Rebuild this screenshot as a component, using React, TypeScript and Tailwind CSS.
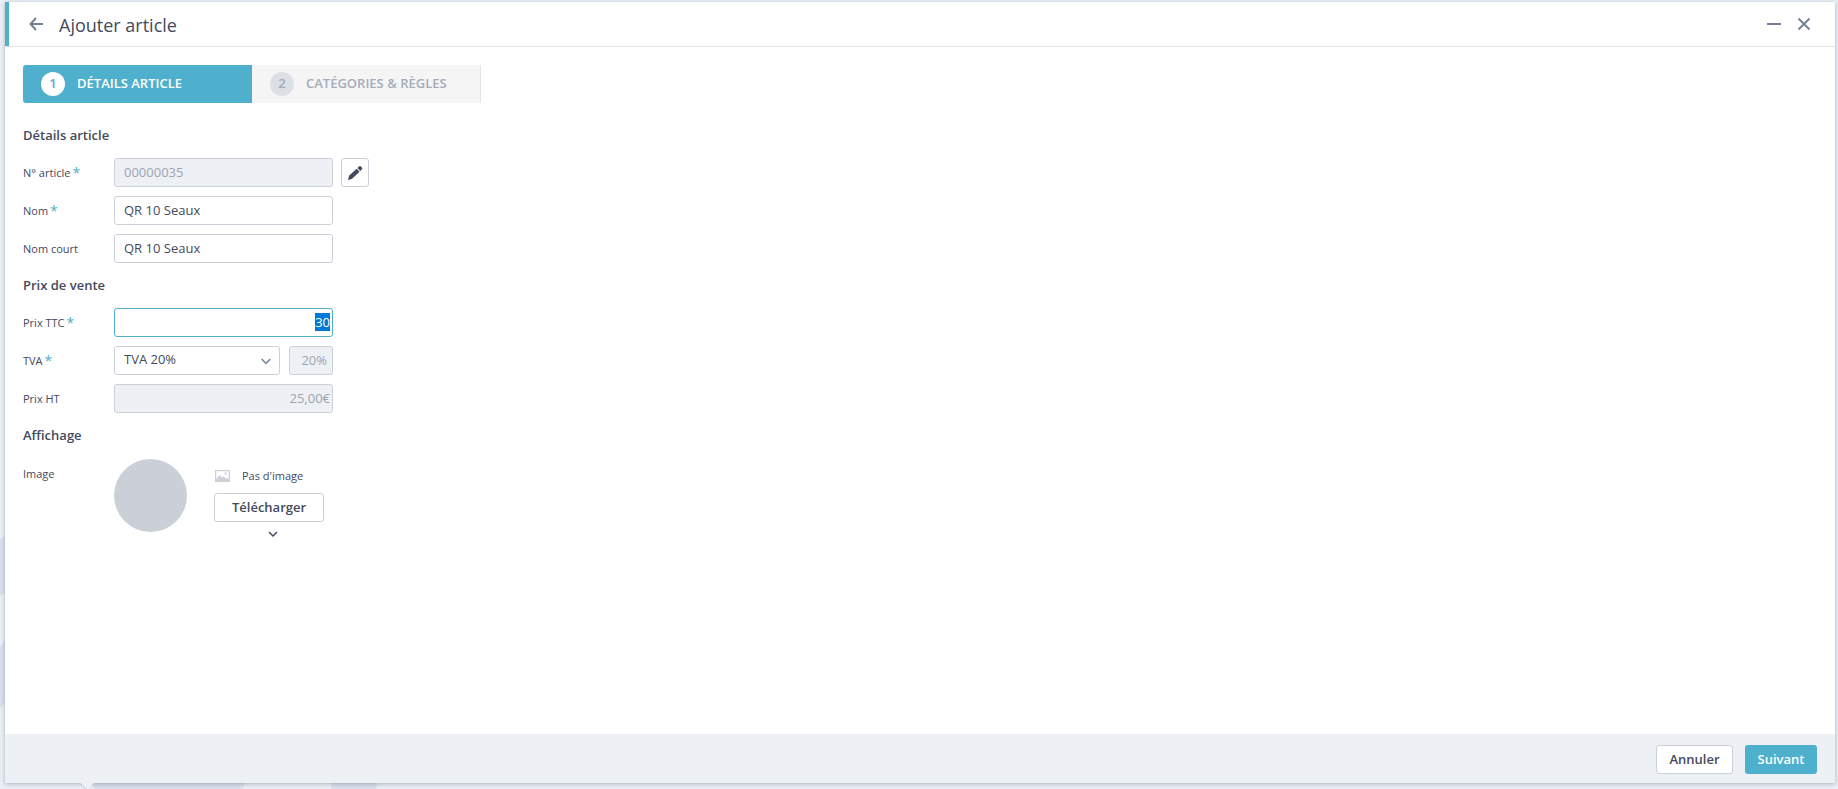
import { useEffect, useRef, useState } from "react";
import type { ReactNode } from "react";

const field =
  "h-[29px] min-w-0 rounded-[3px] border border-[#cbd0d9] bg-white pb-[2px] text-[13px] text-[#434a5c] outline-none focus:border-[#4fb0cd] disabled:bg-[#edf0f5] disabled:text-[#9da4b1]";
const outlineButton =
  "flex h-[29px] items-center justify-center rounded-[3px] border border-[#cbd0d9] bg-white text-[13px] font-semibold text-[#434a5c]";

function SectionTitle({ children }: { children: ReactNode }) {
  return <h2 className="h-[27px] text-[13px] leading-[27px] font-semibold">{children}</h2>;
}

function Row({
  label,
  htmlFor,
  required,
  children,
}: {
  label: string;
  htmlFor: string;
  required?: boolean;
  children: ReactNode;
}) {
  return (
    <div className="flex items-center">
      <label htmlFor={htmlFor} className="flex w-[91px] shrink-0 items-center gap-[2px] pt-px text-[11px] leading-4">
        {label}
        {required && <span className="text-[14px] text-[#4fb0cd]">*</span>}
      </label>
      {children}
    </div>
  );
}

function Step({ index, title, active }: { index: number; title: string; active?: boolean }) {
  return (
    <button
      type="button"
      className={
        active
          ? "flex h-[38px] w-[229px] items-center gap-3 rounded-l-[3px] bg-[#4fb0cd] pl-[18px] text-white"
          : "flex h-[38px] w-[229px] items-center gap-3 border-r border-[#e3e5e8] bg-[#f5f5f5] pl-[18px] text-[#a5acba]"
      }
    >
      <span
        className={
          active
            ? "flex size-6 items-center justify-center rounded-full bg-white text-[13px] font-semibold text-[#4fb0cd]"
            : "flex size-6 items-center justify-center rounded-full bg-[#dce0e6] text-[13px] font-semibold text-[#a5acba]"
        }
      >
        {index}
      </span>
      <span className="text-[13px] font-semibold">{title}</span>
    </button>
  );
}

function Backdrop() {
  return (
    <div aria-hidden="true" className="absolute inset-0 overflow-hidden">
      <svg className="absolute top-0 left-0" width="400" height="789" fill="#d9e0ec">
        <path d="M0 539L30 520V580L0 596ZM0 647L30 605V670L0 709ZM80 770H252L242 789H95ZM333 770H380L376 789H331Z" />
      </svg>
    </div>
  );
}

export default function App() {
  const priceRef = useRef<HTMLInputElement>(null);
  const [name, setName] = useState("QR 10 Seaux");
  const [shortName, setShortName] = useState("QR 10 Seaux");
  const [price, setPrice] = useState("30");

  useEffect(() => {
    priceRef.current?.focus();
    priceRef.current?.select();
  }, []);

  return (
    <div className="relative flex min-h-screen flex-col bg-[#e9eff5] pt-[2px] pr-[3px] pb-[6px] pl-[5px] font-['Open_Sans','Noto_Sans',sans-serif] text-[#434a5c]">
      <Backdrop />
      <main className="relative flex flex-1 flex-col bg-white shadow-[0_1px_4px_rgba(70,80,100,0.4)]">
        <header className="flex h-[45px] items-center border-b border-[#e3e5e9] pr-6">
          <span className="w-1 self-stretch bg-[#4fb0cd]" />
          <button type="button" aria-label="Retour" className="ml-5 text-[#75809a]">
            <svg width="14" height="14" viewBox="0 0 14 14" fill="none" stroke="currentColor" strokeWidth="2">
              <path d="M14 7H1.5M7 1L1.5 7l5.5 6" />
            </svg>
          </button>
          <h1 className="ml-4 flex-1 pt-[2px] text-[18px] leading-6">Ajouter article</h1>
          <button type="button" aria-label="Réduire" className="mr-4 text-[#75809a]">
            <svg width="14" height="14" viewBox="0 0 14 14" fill="currentColor">
              <path d="M0 6h14v2H0z" />
            </svg>
          </button>
          <button type="button" aria-label="Fermer" className="text-[#75809a]">
            <svg width="14" height="14" viewBox="0 0 14 14" fill="none" stroke="currentColor" strokeWidth="2">
              <path d="M1.5 1.5l11 11M12.5 1.5l-11 11" />
            </svg>
          </button>
        </header>

        <div className="flex flex-1 flex-col px-[18px] pt-[18px]">
          <nav aria-label="Étapes" className="flex">
            <Step index={1} title="DÉTAILS ARTICLE" active />
            <Step index={2} title="CATÉGORIES & RÈGLES" />
          </nav>

          <form className="mt-[19px] flex flex-col gap-[9px]">
            <SectionTitle>Détails article</SectionTitle>
            <Row label="N° article" htmlFor="number" required>
              <input id="number" className={`${field} w-[219px] px-[9px]`} defaultValue="00000035" disabled />
              <button type="button" aria-label="Modifier le numéro" className={`${outlineButton} ml-2 w-7`}>
                <svg width="16" height="16" viewBox="0 0 16 16" fill="currentColor">
                  <path d="M1 15l1-4.2 7.6-7.1 3 3-7.8 7.2zM10.4 3l1.7-1.6c.5-.5 1.2-.5 1.7 0l1.1 1.1c.5.5.5 1.2 0 1.7L13.3 5.9z" />
                </svg>
              </button>
            </Row>
            <Row label="Nom" htmlFor="name" required>
              <input
                id="name"
                className={`${field} w-[219px] px-[9px]`}
                value={name}
                onChange={(e) => setName(e.target.value)}
              />
            </Row>
            <Row label="Nom court" htmlFor="short">
              <input
                id="short"
                className={`${field} w-[219px] px-[9px]`}
                value={shortName}
                onChange={(e) => setShortName(e.target.value)}
              />
            </Row>

            <SectionTitle>Prix de vente</SectionTitle>
            <Row label="Prix TTC" htmlFor="gross" required>
              <input
                id="gross"
                ref={priceRef}
                className={`${field} w-[219px] px-[2px] text-right selection:bg-[#0078d7] selection:text-white`}
                value={price}
                onChange={(e) => setPrice(e.target.value)}
              />
            </Row>
            <Row label="TVA" htmlFor="vat" required>
              <div className="relative flex">
                <select id="vat" className={`${field} w-[166px] appearance-none px-[9px]`}>
                  <option>TVA 20%</option>
                </select>
                <svg
                  className="pointer-events-none absolute top-3 right-[9px] text-[#75809a]"
                  width="10"
                  height="7"
                  viewBox="0 0 10 7"
                  fill="none"
                  stroke="currentColor"
                  strokeWidth="1.5"
                >
                  <path d="M.7 1L5 5.4 9.3 1" />
                </svg>
              </div>
              <input
                aria-label="Taux de TVA"
                className={`${field} ml-[9px] w-11 px-[5px] text-right`}
                defaultValue="20%"
                disabled
              />
            </Row>
            <Row label="Prix HT" htmlFor="net">
              <input id="net" className={`${field} w-[219px] px-[2px] text-right`} defaultValue="25,00€" disabled />
            </Row>

            <SectionTitle>Affichage</SectionTitle>
            <div className="flex items-start pt-px">
              <span className="w-[91px] pt-[7px] text-[11px] leading-4">Image</span>
              <span className="size-[73px] rounded-full bg-[#cbd0d8]" />
              <div className="ml-[27px] flex w-[110px] flex-col pt-[9px]">
                <div className="flex items-center gap-3 pl-px text-[11px] leading-4">
                  <svg width="15" height="12" viewBox="0 0 15 12" fill="#cbd0d9" fillRule="evenodd">
                    <path d="M0 0h15v12H0zM1.3 1.3v8.2L4.6 5l2.2 2.8 1.5-1.5L11 8.6l1-.8 1.7 1.6V1.3zM9.7 2.6h2v2h-2z" />
                  </svg>
                  Pas d'image
                </div>
                <button type="button" className={`${outlineButton} mt-[9px]`}>
                  Télécharger
                </button>
                <button type="button" aria-label="Plus d'options" className="mt-[9px] ml-[54px] self-start">
                  <svg width="10" height="7" viewBox="0 0 10 7" fill="none" stroke="currentColor" strokeWidth="1.5">
                    <path d="M1 1l4 4 4-4" />
                  </svg>
                </button>
              </div>
            </div>
          </form>
        </div>

        <footer className="relative flex h-[49px] items-center justify-end gap-3 bg-[#edf0f5] pt-[2px] pr-[18px]">
          <button type="button" className={`${outlineButton} w-[77px]`}>
            Annuler
          </button>
          <button
            type="button"
            className="h-[29px] w-[72px] rounded-[3px] bg-[#4fb0cd] text-[13px] font-semibold text-white"
          >
            Suivant
          </button>
          <svg className="absolute top-full left-[75px]" width="14" height="6" viewBox="0 0 14 6">
            <path d="M0 0h14L8 6H6z" fill="#edf0f5" />
            <path d="M0 0l6 6" stroke="#c9ced8" />
          </svg>
        </footer>
      </main>
    </div>
  );
}
